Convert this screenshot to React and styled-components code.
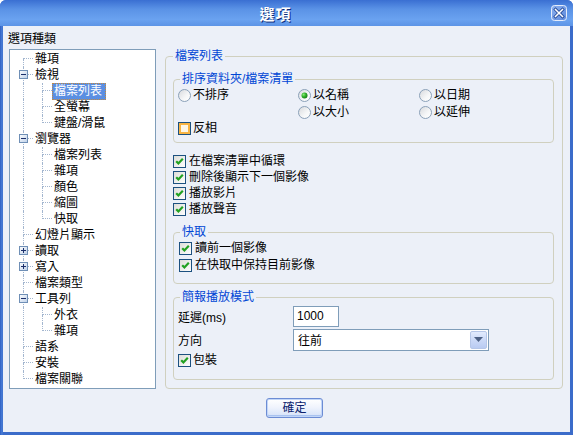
import React from 'react';
import styled, { createGlobalStyle } from 'styled-components';

const GlobalStyle = createGlobalStyle`
  html, body {
    margin: 0;
    padding: 0;
    background: #fff;
  }
  body {
    font-family: "Liberation Sans", "Noto Sans CJK TC", sans-serif;
    font-size: 12px;
    color: #000;
  }
`

const Window = styled.div`
  width: 573px;
  height: 435px;
  display: flex;
  flex-direction: column;
  border-radius: 6px 6px 0 0;
  overflow: hidden;
  background: linear-gradient(to right, #2f5fc2 0, #4a7fd8 2px, #3b6cca 3px);
`

const TitleBar = styled.div`
  height: 26px;
  flex: none;
  display: flex;
  align-items: center;
  background: linear-gradient(to bottom, #3a6fd2 0%, #5a92e6 35%, #6aa2f0 75%, #5c94e6 100%);
`

const Title = styled.div`
  flex: 1;
  text-align: center;
  color: #fff;
  font-family: "Noto Sans CJK TC", sans-serif;
  font-weight: bold;
  font-size: 15px;
  letter-spacing: 1px;
  text-shadow: 1px 1px 0 #0a2a78;
`

const CloseButton = styled.span`
  width: 16px;
  height: 16px;
  margin-right: 6px;
  display: flex;
`

const Frame = styled.div`
  flex: 1;
  margin: 0 3px 3px;
  background: #ecf0f8;
  display: flex;
  flex-direction: column;
`

const Body = styled.div`
  display: flex;
  padding: 5px 0 0 6px;
`

const LeftColumn = styled.div`
  width: 147px;
  display: flex;
  flex-direction: column;
`

const Caption = styled.div`
  line-height: 16px;
  height: 16px;
  margin-left: -1px;
`

const Tree = styled.div`
  margin-top: 2px;
  height: 340px;
  box-sizing: border-box;
  border: 1px solid #7f9db9;
  background: #fff;
  padding: 1px 0 0 4px;
`

const dots = '1px dotted #a3b6cf'

const TreeRow = styled.div`
  display: flex;
  align-items: center;
  height: 16px;
`

const Guide = styled.span`
  width: 19px;
  height: 16px;
  flex: none;
  display: flex;
`

const GuideLine = styled.span`
  margin-left: 9px;
  height: 16px;
  border-left: ${({ $on }) => ($on ? dots : 'none')};
`

const Elbow = styled.span`
  position: relative;
  width: 19px;
  height: 16px;
  flex: none;
  display: flex;
  flex-direction: column;
`

const ElbowTop = styled.span`
  box-sizing: border-box;
  margin-left: 9px;
  width: 10px;
  height: 8px;
  border-left: ${({ $on }) => ($on ? dots : 'none')};
  border-bottom: ${dots};
`

const ElbowBottom = styled.span`
  margin-left: 9px;
  height: 8px;
  border-left: ${({ $on }) => ($on ? dots : 'none')};
`

const ToggleBox = styled.svg`
  position: absolute;
  left: 5px;
  top: 3px;
`

const NodeLabel = styled.span`
  height: 15px;
  line-height: 15px;
  padding: 0 3px 0 1px;
  white-space: nowrap;
  border: 1px ${({ $selected }) => ($selected ? 'dotted #c58a3c' : 'solid transparent')};
  background: ${({ $selected }) => ($selected ? '#5b8fe2' : 'transparent')};
  color: ${({ $selected }) => ($selected ? '#fff' : '#000')};
`

const RightColumn = styled.div`
  width: 398px;
  margin-left: 9px;
  margin-top: 18px;
`

const Group = styled.fieldset`
  margin: ${({ $mt }) => $mt || 0}px 0 0;
  padding: ${({ $pad }) => $pad};
  border: 1px solid #d0d0bf;
  border-radius: 4px;
  min-inline-size: 0;
`

const Legend = styled.legend`
  padding: 0 2px;
  margin-left: ${({ $ml }) => $ml || 0}px;
  line-height: 14px;
  height: 14px;
  color: #0046d5;
`

const RadioGrid = styled.div`
  display: grid;
  grid-template-columns: 120px 121px auto;
  grid-template-rows: 18px 16px;
`

const Option = styled.label`
  display: flex;
  align-items: center;
  gap: ${({ $gap }) => $gap || 3}px;
  height: 16px;
  line-height: 16px;
  white-space: nowrap;
`

const OptionCell = styled(Option)`
  height: auto;
  grid-column: ${({ $col }) => $col};
  grid-row: ${({ $row }) => $row};
`

const CheckList = styled.div`
  display: flex;
  flex-direction: column;
  gap: ${({ $gap }) => $gap || 0}px;
  margin-top: ${({ $mt }) => $mt || 0}px;
`

const FieldRow = styled.div`
  display: flex;
  align-items: center;
  height: 23px;
`

const FieldLabel = styled.span`
  width: 115px;
  flex: none;
`

const TextInput = styled.div`
  width: 46px;
  height: 21px;
  box-sizing: border-box;
  border: 1px solid #7f9db9;
  background: #fff;
  padding-left: 3px;
  font-size: 12px;
  line-height: 19px;
`

const Select = styled.div`
  width: 196px;
  height: 22px;
  box-sizing: border-box;
  border: 1px solid #7f9db9;
  background: #fff;
  display: flex;
  align-items: center;
  padding: 1px;
`

const SelectValue = styled.span`
  flex: 1;
  padding-left: 3px;
`

const DropButton = styled.span`
  width: 17px;
  height: 18px;
  box-sizing: border-box;
  border: 1px solid #b5c6e8;
  border-radius: 2px;
  background: linear-gradient(to bottom, #e2ebfd 0%, #cbd9f7 50%, #b9cbf2 100%);
  display: flex;
  align-items: center;
  justify-content: center;
`

const Footer = styled.div`
  margin-top: 9px;
  padding-left: 263px;
`

const Button = styled.button`
  width: 57px;
  height: 20px;
  padding: 0;
  border: 1px solid #6c8cd4;
  border-radius: 3px;
  background: linear-gradient(to bottom, #ffffff 0%, #f0f4fd 45%, #d4e1f8 100%);
  box-shadow: inset 0 0 0 1px #c2d6f8, inset 0 -1px 0 1px #a9c3f0;
  color: #0c1f6e;
  font-family: inherit;
  font-size: 12px;
  line-height: 16px;
`

function CloseIcon() {
  return (
    <svg width="16" height="16" viewBox="0 0 16 16">
      <defs>
        <linearGradient id="closeFill" x1="0" y1="0" x2="1" y2="1">
          <stop offset="0" stopColor="#8cb0ee" />
          <stop offset="1" stopColor="#5d89dc" />
        </linearGradient>
      </defs>
      <rect x="0.5" y="0.5" width="15" height="15" rx="3" fill="url(#closeFill)" stroke="#e4ecfb" />
      <path d="M4.5 4.5 L11.5 11.5 M11.5 4.5 L4.5 11.5" stroke="#2a4f9c" strokeWidth="3.2" strokeLinecap="square" />
      <path d="M4.5 4.5 L11.5 11.5 M11.5 4.5 L4.5 11.5" stroke="#fff" strokeWidth="1.5" strokeLinecap="square" />
    </svg>
  )
}

function Toggle({ open }) {
  return (
    <ToggleBox width="9" height="9" viewBox="0 0 9 9">
      <defs>
        <linearGradient id="toggleFill" x1="0" y1="0" x2="1" y2="1">
          <stop offset="0" stopColor="#ffffff" />
          <stop offset="1" stopColor="#bccfe8" />
        </linearGradient>
      </defs>
      <rect x="0.5" y="0.5" width="8" height="8" fill="url(#toggleFill)" stroke="#6f8fb6" />
      <path d="M2 4.5 H7" stroke="#1b2f6b" />
      {!open && <path d="M4.5 2 V7" stroke="#1b2f6b" />}
    </ToggleBox>
  )
}

function Radio({ checked }) {
  return (
    <svg width="13" height="13" viewBox="0 0 13 13">
      <defs>
        <linearGradient id="radioFill" x1="0" y1="0" x2="1" y2="1">
          <stop offset="0" stopColor="#d6d8dc" />
          <stop offset="0.6" stopColor="#f6f7f8" />
          <stop offset="1" stopColor="#ffffff" />
        </linearGradient>
        <radialGradient id="radioDot" cx="0.35" cy="0.35" r="0.7">
          <stop offset="0" stopColor="#8cec7a" />
          <stop offset="0.5" stopColor="#31b22a" />
          <stop offset="1" stopColor="#167a13" />
        </radialGradient>
      </defs>
      <circle cx="6.5" cy="6.5" r="6" fill="url(#radioFill)" stroke="#8aa0b8" />
      {checked && <circle cx="6.5" cy="6.5" r="3" fill="url(#radioDot)" />}
    </svg>
  )
}

function CheckBox({ checked, hover }) {
  return (
    <svg width="13" height="13" viewBox="0 0 13 13">
      <defs>
        <linearGradient id="checkFill" x1="0" y1="0" x2="1" y2="1">
          <stop offset="0" stopColor="#dcdcd7" />
          <stop offset="1" stopColor="#ffffff" />
        </linearGradient>
      </defs>
      <rect x="0.5" y="0.5" width="12" height="12" fill="url(#checkFill)" stroke="#1c5180" />
      {hover && <rect x="2" y="2" width="9" height="9" fill="#fdf6e6" stroke="#f8b443" strokeWidth="2" />}
      {checked && (
        <path d="M3.2 6.2 L5.4 8.4 L9.8 3.8" fill="none" stroke="#21a121" strokeWidth="2.2" />
      )}
    </svg>
  )
}

function DropArrow() {
  return (
    <svg width="9" height="5" viewBox="0 0 9 5">
      <path d="M0 0 H9 L4.5 5 Z" fill="#4d6185" />
    </svg>
  )
}

const tree = [
  { label: '雜項' },
  { label: '檢視', open: true, children: [{ label: '檔案列表', selected: true }, { label: '全螢幕' }, { label: '鍵盤/滑鼠' }] },
  { label: '瀏覽器', open: true, children: [{ label: '檔案列表' }, { label: '雜項' }, { label: '顏色' }, { label: '縮圖' }, { label: '快取' }] },
  { label: '幻燈片顯示' },
  { label: '讀取', open: false, children: [] },
  { label: '寫入', open: false, children: [] },
  { label: '檔案類型' },
  { label: '工具列', open: true, children: [{ label: '外衣' }, { label: '雜項' }] },
  { label: '語系' },
  { label: '安裝' },
  { label: '檔案關聯' },
]

// flatten the nodes into rows with the guide lines each row needs
function flatten(nodes, guides = [], depth = 0, out = []) {
  nodes.forEach((node, i) => {
    const last = i === nodes.length - 1
    out.push({
      label: node.label,
      selected: node.selected,
      guides,
      top: !(depth === 0 && i === 0),
      bottom: !last,
      toggle: node.children ? { open: node.open } : null,
    })
    if (node.children && node.open) flatten(node.children, [...guides, !last], depth + 1, out)
  })
  return out
}

const rows = flatten(tree)

function FolderTree() {
  return (
    <Tree>
      {rows.map((row, i) => (
        <TreeRow key={i}>
          {row.guides.map((on, j) => (
            <Guide key={j}>
              <GuideLine $on={on} />
            </Guide>
          ))}
          <Elbow>
            <ElbowTop $on={row.top} />
            <ElbowBottom $on={row.bottom} />
            {row.toggle && <Toggle open={row.toggle.open} />}
          </Elbow>
          <NodeLabel $selected={row.selected}>{row.label}</NodeLabel>
        </TreeRow>
      ))}
    </Tree>
  )
}

const sortOptions = [
  { label: '不排序', col: 1, row: 1 },
  { label: '以名稱', col: 2, row: 1, checked: true },
  { label: '以日期', col: 3, row: 1 },
  { label: '以大小', col: 2, row: 2 },
  { label: '以延伸', col: 3, row: 2 },
]

const listOptions = ['在檔案清單中循環', '刪除後顯示下一個影像', '播放影片', '播放聲音']
const cacheOptions = ['讀前一個影像', '在快取中保持目前影像']

export default function App() {
  return (
    <>
      <GlobalStyle />
      <Window>
        <TitleBar>
          <Title>選項</Title>
          <CloseButton>
            <CloseIcon />
          </CloseButton>
        </TitleBar>
        <Frame>
          <Body>
            <LeftColumn>
              <Caption>選項種類</Caption>
              <FolderTree />
            </LeftColumn>
            <RightColumn>
              <Group $pad="9px 8px 8px 7px">
                <Legend>檔案列表</Legend>

                <Group $pad="0 4px 6px 4px">
                  <Legend $ml={2}>排序資料夾/檔案清單</Legend>
                  <RadioGrid>
                    {sortOptions.map((o) => (
                      <OptionCell key={o.label} $col={o.col} $row={o.row} $gap={2}>
                        <Radio checked={o.checked} />
                        {o.label}
                      </OptionCell>
                    ))}
                  </RadioGrid>
                  <Option $gap={2}>
                    <CheckBox hover />
                    反相
                  </Option>
                </Group>

                <CheckList $mt={10}>
                  {listOptions.map((t) => (
                    <Option key={t}>
                      <CheckBox checked />
                      {t}
                    </Option>
                  ))}
                </CheckList>

                <Group $mt={8} $pad="1px 4px 10px 5px">
                  <Legend $ml={1}>快取</Legend>
                  <CheckList $gap={1}>
                    {cacheOptions.map((t) => (
                      <Option key={t}>
                        <CheckBox checked />
                        {t}
                      </Option>
                    ))}
                  </CheckList>
                </Group>

                <Group $mt={6} $pad="1px 4px 11px 4px">
                  <Legend $ml={2}>簡報播放模式</Legend>
                  <FieldRow>
                    <FieldLabel>延遲(ms)</FieldLabel>
                    <TextInput>1000</TextInput>
                  </FieldRow>
                  <FieldRow>
                    <FieldLabel>方向</FieldLabel>
                    <Select>
                      <SelectValue>往前</SelectValue>
                      <DropButton>
                        <DropArrow />
                      </DropButton>
                    </Select>
                  </FieldRow>
                  <CheckList $mt={1}>
                    <Option $gap={2}>
                      <CheckBox checked />
                      包裝
                    </Option>
                  </CheckList>
                </Group>
              </Group>
            </RightColumn>
          </Body>
          <Footer>
            <Button>確定</Button>
          </Footer>
        </Frame>
      </Window>
    </>
  )
}
